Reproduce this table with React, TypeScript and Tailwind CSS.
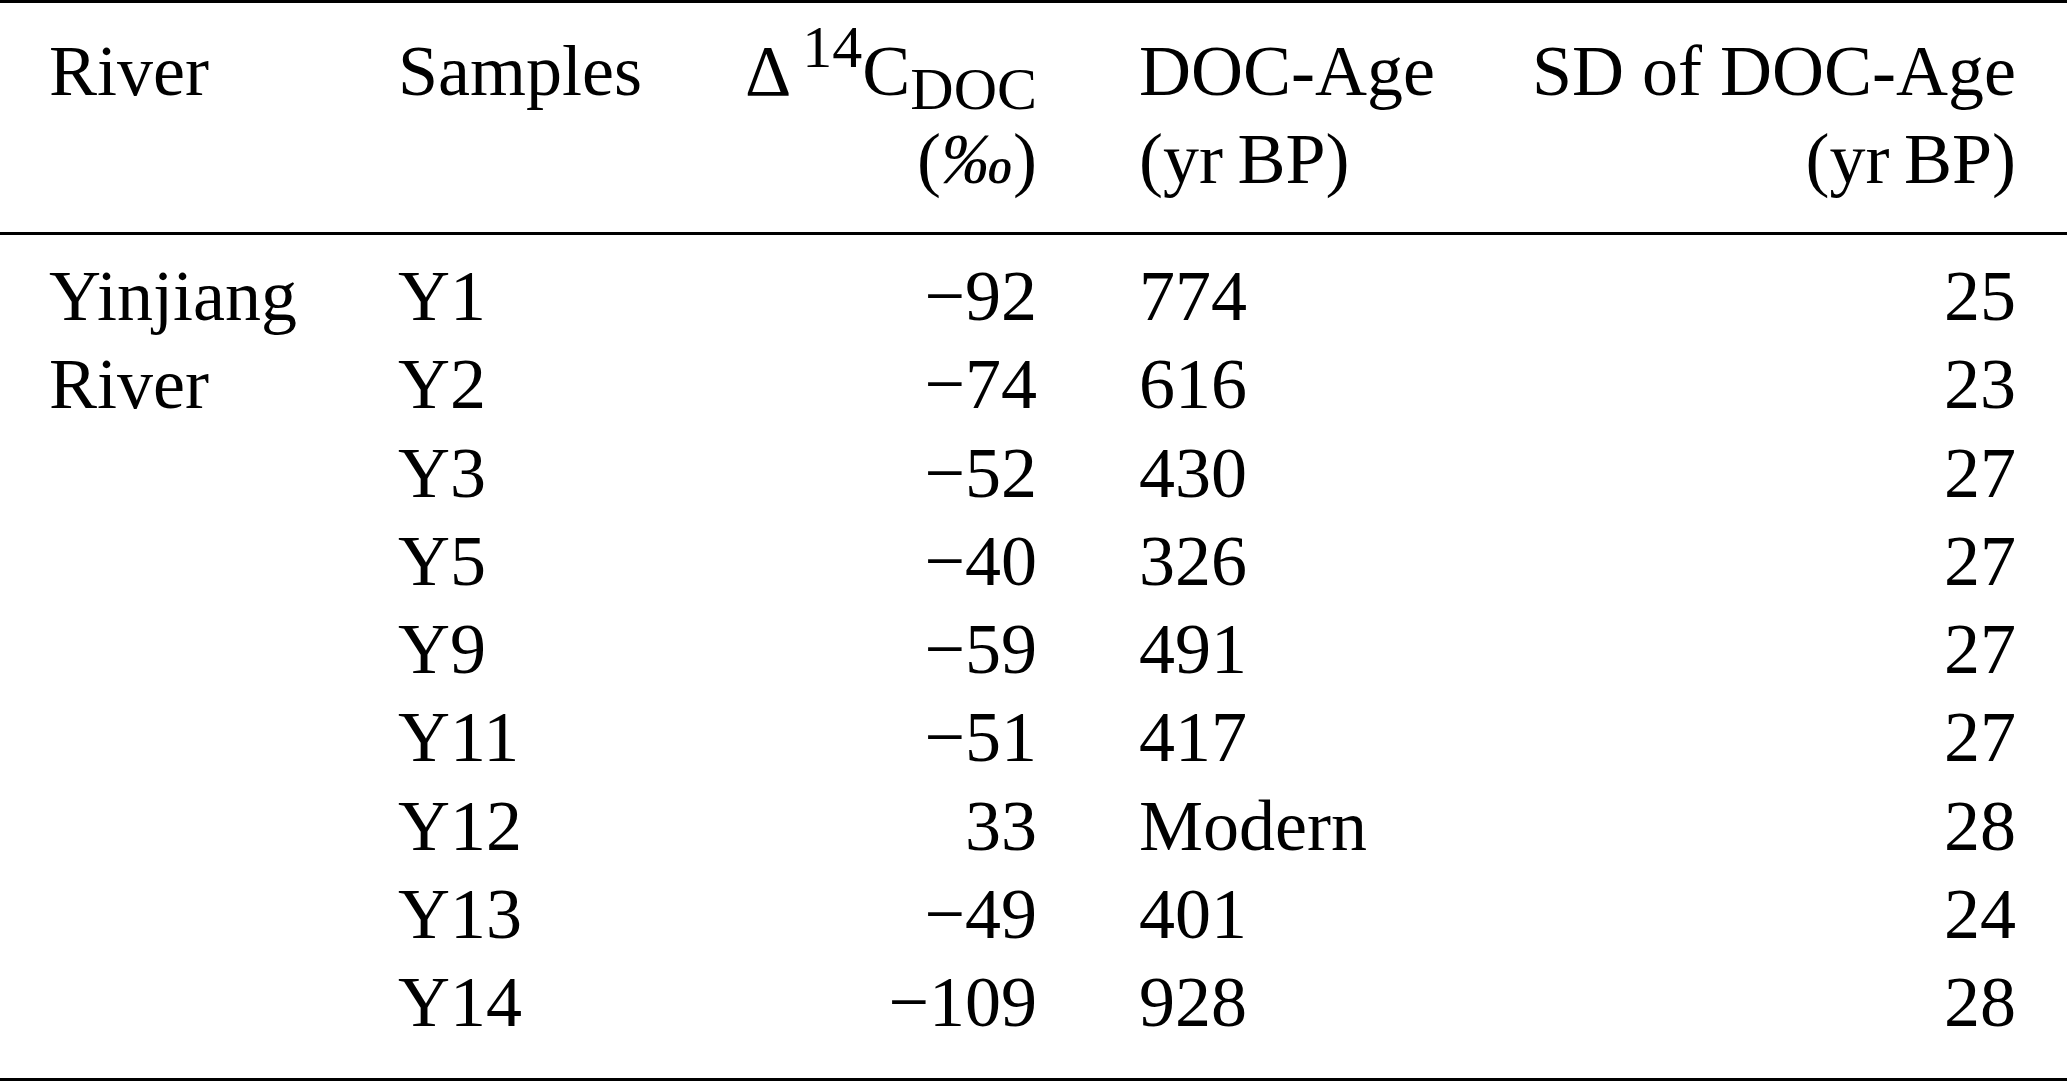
const ROWS = [
  { river: 'Yinjiang', sample: 'Y1', delta: '\u221292', age: '774', sd: '25' },
  { river: 'River', sample: 'Y2', delta: '\u221274', age: '616', sd: '23' },
  { river: '', sample: 'Y3', delta: '\u221252', age: '430', sd: '27' },
  { river: '', sample: 'Y5', delta: '\u221240', age: '326', sd: '27' },
  { river: '', sample: 'Y9', delta: '\u221259', age: '491', sd: '27' },
  { river: '', sample: 'Y11', delta: '\u221251', age: '417', sd: '27' },
  { river: '', sample: 'Y12', delta: '33', age: 'Modern', sd: '28' },
  { river: '', sample: 'Y13', delta: '\u221249', age: '401', sd: '24' },
  { river: '', sample: 'Y14', delta: '\u2212109', age: '928', sd: '28' },
]

const COLS = 'grid grid-cols-[349px_240px_399px_380px_1fr] pl-[49px] pr-[51px]'

export default function App() {
  return (
    <div className="bg-white min-h-screen w-[2067px] text-black font-['Liberation_Serif',serif] text-[72px]">
      {/* Header */}
      <div className={`${COLS} border-t-[3px] border-b-[3px] border-black pt-[24px] pb-[29px] leading-[88px]`}>
        <div>River</div>
        <div>Samples</div>
        <div className="text-right whitespace-nowrap">
          <div>
            Δ<span className="text-[60px] leading-[0] align-[28px] pl-[11px]">14</span>C
            <span className="text-[60px] leading-[0] align-[-14px]">DOC</span>
          </div>
          <div>
            (<span className="italic">‰</span>)
          </div>
        </div>
        <div className="pl-[102px] whitespace-nowrap">
          <div>DOC-Age</div>
          <div>(yr{'\u2009'}BP)</div>
        </div>
        <div className="text-right whitespace-nowrap">
          <div>SD of DOC-Age</div>
          <div>(yr{'\u2009'}BP)</div>
        </div>
      </div>

      {/* Body */}
      <div className="border-b-[3px] border-black pt-[17px] pb-[31px] leading-[88.3px]">
        {ROWS.map((r) => (
          <div key={r.sample} className={COLS}>
            <div>{r.river}</div>
            <div>{r.sample}</div>
            <div className="text-right">{r.delta}</div>
            <div className="pl-[102px]">{r.age}</div>
            <div className="text-right">{r.sd}</div>
          </div>
        ))}
      </div>
    </div>
  )
}
